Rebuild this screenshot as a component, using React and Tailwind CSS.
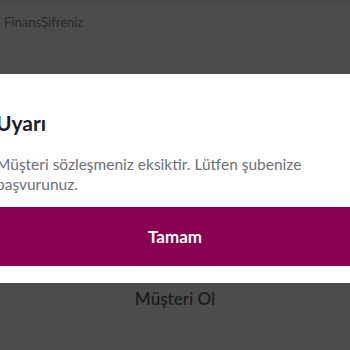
export default function App() {
  return (
    <div className="relative w-[350px] h-[350px] overflow-hidden bg-[#4c4c4c] font-['Lato',sans-serif]">
      <div className="h-[5px] bg-[#474747]" />
      <p className="px-[4px] pt-[10px] text-[13px] leading-[15px] text-[#2a2a2a]">FinansŞifreniz</p>
      <p className="mt-[259px] text-center text-[17px] leading-[20px] font-semibold text-[#1c1c1c]">Müşteri Ol</p>

      <div className="absolute top-[74px] left-[-28px] w-[406px] bg-white pt-[37px] pb-[17px]">
        <h2 className="px-[24px] text-[21px] leading-[24px] font-bold text-[#1e1b2e]">Uyarı</h2>
        <p className="px-[24px] mt-[19px] text-[15.5px] leading-[20px] text-[#6d6f7b]">
          Müşteri sözleşmeniz eksiktir. Lütfen şubenize başvurunuz.
        </p>
        <button className="mt-[13px] w-full h-[59px] bg-[#8a0050] text-white text-[17px] font-bold">
          Tamam
        </button>
      </div>
    </div>
  )
}
